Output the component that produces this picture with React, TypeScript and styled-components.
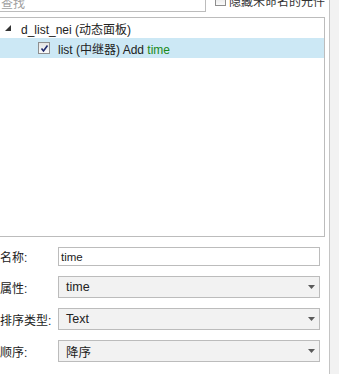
import styled, { createGlobalStyle } from "styled-components";

const Global = createGlobalStyle`
  html, body {
    margin: 0;
    background: #fff;
    font-family: "Liberation Sans", Arial, "Noto Sans CJK SC", sans-serif;
    font-size: 12px;
    color: #222;
    overflow: hidden;
  }
`;

const Page = styled.div`
  display: flex;
  width: 339px;
  height: 374px;
`;

const Main = styled.div`
  width: 329px;
  display: flex;
  flex-direction: column;
`;

const Side = styled.div`
  width: 9px;
  border-left: 1px solid #c4c4c4;
  background: #f2f2f2;
`;

const TopBar = styled.div`
  display: flex;
  align-items: flex-end;
  height: 12px;
`;

const Search = styled.div`
  box-sizing: border-box;
  width: 206px;
  height: 22px;
  margin-top: -10px;
  border: 1px solid #bcbcbc;
  border-left: none;
  display: flex;
  align-items: center;
  padding: 2px 0 0 1px;
  color: #a0a0a0;
  flex-shrink: 0;
`;

const Hide = styled.label`
  display: flex;
  align-items: center;
  gap: 3px;
  margin: -10px 0 1px 9px;
  height: 22px;
  color: #333;
  white-space: nowrap;
`;

const Box = styled.span<{ $size: number }>`
  box-sizing: border-box;
  width: ${({ $size }) => $size}px;
  height: ${({ $size }) => $size}px;
  border: 1px solid #8e8e8e;
  background: linear-gradient(#e4e4e4, #fafafa);
  display: inline-flex;
  align-items: center;
  justify-content: center;
  flex-shrink: 0;
`;

const Tree = styled.div`
  box-sizing: border-box;
  margin: 5px 0 0 -1px;
  width: 326px;
  height: 220px;
  border: 1px solid #bcbcbc;
  background: #fff;
`;

const Row = styled.div<{ $selected?: boolean; $indent: number }>`
  display: flex;
  align-items: center;
  height: 20px;
  padding-left: ${({ $indent }) => $indent}px;
  background: ${({ $selected }) => ($selected ? "#cce8f5" : "transparent")};
  gap: 8px;
  white-space: nowrap;
`;

const NodeName = styled.span`
  margin-left: 2px;
`;

const Green = styled.span`
  color: #1a8a1a;
`;

const Form = styled.div`
  display: flex;
  flex-direction: column;
  gap: 10px;
  margin-top: 10px;
`;

const Field = styled.div`
  display: flex;
  align-items: center;
`;

const Label = styled.span`
  width: 58px;
  flex-shrink: 0;
  white-space: nowrap;
`;

const Input = styled.div`
  box-sizing: border-box;
  width: 262px;
  height: 19px;
  border: 1px solid #bcbcbc;
  padding: 0 2px;
  display: flex;
  align-items: center;
  font-size: 11.5px;
`;

const Select = styled.div`
  box-sizing: border-box;
  width: 262px;
  height: 22px;
  border: 1px solid #bcbcbc;
  background: #f2f2f2;
  padding: 0 4px 0 7px;
  display: flex;
  align-items: center;
  justify-content: space-between;
  font-size: 12.5px;
`;

const Arrow = () => (
  <svg width="7" height="4" viewBox="0 0 7 4">
    <path d="M0 0h7L3.5 4z" fill="#5a5a5a" />
  </svg>
);

const Check = () => (
  <svg width="9" height="9" viewBox="0 0 9 9">
    <path d="M1.5 4.5l2 2.5 4-5.5" fill="none" stroke="#1f2a6e" strokeWidth="1.6" />
  </svg>
);

const Expand = () => (
  <svg width="6" height="6" viewBox="0 0 6 6">
    <path d="M6 0v6H0z" fill="#333" />
  </svg>
);

export default function App() {
  return (
    <>
      <Global />
      <Page>
        <Main>
          <TopBar>
            <Search>查找</Search>
            <Hide>
              <Box $size={11} />
              隐藏未命名的元件
            </Hide>
          </TopBar>
          <Tree>
            <Row $indent={5}>
              <Expand />
              <NodeName>d_list_nei (动态面板)</NodeName>
            </Row>
            <Row $indent={38} $selected>
              <Box $size={12}>
                <Check />
              </Box>
              <span>
                list (中继器) Add <Green>time</Green>
              </span>
            </Row>
          </Tree>
          <Form>
            <Field>
              <Label>名称:</Label>
              <Input>time</Input>
            </Field>
            <Field>
              <Label>属性:</Label>
              <Select>
                time
                <Arrow />
              </Select>
            </Field>
            <Field>
              <Label>排序类型:</Label>
              <Select>
                Text
                <Arrow />
              </Select>
            </Field>
            <Field>
              <Label>顺序:</Label>
              <Select>
                降序
                <Arrow />
              </Select>
            </Field>
          </Form>
        </Main>
        <Side />
      </Page>
    </>
  );
}
